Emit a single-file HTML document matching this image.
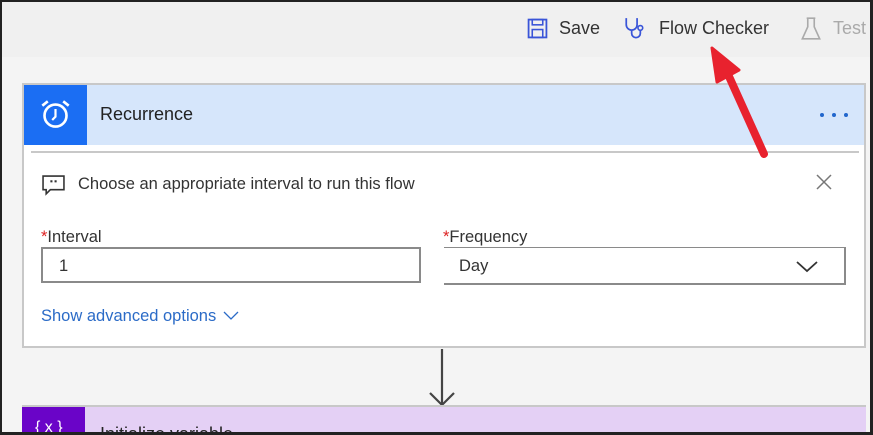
<!DOCTYPE html>
<html style="overflow:hidden;height:435px"><head><style>
*{margin:0;padding:0;box-sizing:border-box}
body{width:873px;height:435px;overflow:hidden;font-family:"Liberation Sans",sans-serif;background:#f4f4f4;position:relative}
.frame{position:absolute;left:0;top:0;width:873px;height:435px;border:2px solid #222;border-right-width:3px;border-bottom-width:3px;z-index:10;pointer-events:none}
.top{position:absolute;left:0;top:0;width:873px;height:57px;background:#f0f0f0}
.t{position:absolute;top:18px;font-size:18px;color:#333}
.card{position:absolute;left:22px;top:83px;width:844px;height:265px;background:#fff;border:2px solid #c8c8c8}
.hdr{position:absolute;left:0;top:0;width:840px;height:60px;background:#d6e6fb}
.ico{position:absolute;left:0;top:0;width:63px;height:60px;background:#1b6ef3}
.abs{position:absolute}
.lbl{font-size:16.5px;color:#333}
.box{position:absolute;border:2px solid #8a8a8a;background:#fff}
</style></head><body>
<div class="top"></div>
<svg class="abs" style="left:527px;top:18px" width="21" height="21" viewBox="0 0 20 20"><rect x="1.5" y="1.5" width="17" height="17" fill="none" stroke="#3a55d8" stroke-width="1.7"/><rect x="5" y="1.5" width="10" height="5" fill="none" stroke="#3a55d8" stroke-width="1.5"/><rect x="5" y="11" width="10" height="7.5" fill="none" stroke="#3a55d8" stroke-width="1.5"/></svg>
<div class="t" style="left:559px">Save</div>
<svg class="abs" style="left:623px;top:16px" width="26" height="26" viewBox="0 0 24 24"><path d="M3 2v6a5 5 0 0 0 10 0V2M8 13v3a4 4 0 0 0 8 0v-3" fill="none" stroke="#3a55d8" stroke-width="1.6"/><circle cx="16" cy="11" r="2.2" fill="none" stroke="#3a55d8" stroke-width="1.5"/></svg>
<div class="t" style="left:659px">Flow Checker</div>
<svg class="abs" style="left:800px;top:16px" width="22" height="26" viewBox="0 0 20 24"><path d="M6 2h8M7 2v8L2 21h16L13 10V2" fill="none" stroke="#aaa" stroke-width="1.5"/></svg>
<div class="t" style="left:833px;color:#aaa">Test</div>

<div class="card">
 <div class="hdr"></div>
 <div class="ico"><svg style="position:absolute;left:15px;top:13px" width="33" height="33" viewBox="0 0 30 30"><circle cx="15" cy="16" r="10" fill="none" stroke="#fff" stroke-width="2.4"/><path d="M15 10v7l-3 3" fill="none" stroke="#fff" stroke-width="2"/><path d="M3 7l5-4M27 7l-5-4" stroke="#fff" stroke-width="2.4"/></svg></div>
 <div class="abs" style="left:76px;top:19px;font-size:18px;color:#222">Recurrence</div>
 <svg class="abs" style="left:795px;top:27px" width="32" height="6"><circle cx="3" cy="3" r="2" fill="#2266cc"/><circle cx="15" cy="3" r="2" fill="#2266cc"/><circle cx="27" cy="3" r="2" fill="#2266cc"/></svg>
 <div class="abs" style="left:7px;top:66px;width:828px;height:2px;background:#c8c8c8"></div>
 <svg class="abs" style="left:18px;top:90px" width="23" height="21" viewBox="0 0 22 20"><path d="M1 1h20v13H8l-4 4v-4H1z" fill="none" stroke="#333" stroke-width="1.5"/><rect x="8" y="5" width="2" height="2" fill="#333"/><rect x="12" y="5" width="2" height="2" fill="#333"/></svg>
 <div class="abs lbl" style="left:54px;top:90px">Choose an appropriate interval to run this flow</div>
 <svg class="abs" style="left:791px;top:88px" width="18" height="18" viewBox="0 0 18 18"><path d="M2 2l14 14M16 2L2 16" stroke="#777" stroke-width="1.5"/></svg>
 <div class="abs lbl" style="left:17px;top:143px"><span style="color:#d22">*</span>Interval</div>
 <div class="box" style="left:17px;top:162px;width:380px;height:36px"><span class="abs lbl" style="left:16px;top:8px">1</span></div>
 <div class="abs lbl" style="left:419px;top:143px"><span style="color:#d22">*</span>Frequency</div>
 <div class="box" style="left:420px;top:162px;width:402px;height:38px;border-left:none;border-top-width:1px"><span class="abs lbl" style="left:15px;top:9px">Day</span><svg style="position:absolute;left:352px;top:12px" width="22" height="14" viewBox="0 0 22 14"><path d="M1 2l10 9 10-9" fill="none" stroke="#333" stroke-width="1.8"/></svg></div>
 <div class="abs" style="left:17px;top:222px;font-size:16.5px;color:#2b6bc7">Show advanced options <svg width="16" height="10" viewBox="0 0 16 10" style="margin-left:2px"><path d="M1 1l7 7 7-7" fill="none" stroke="#2b6bc7" stroke-width="1.3"/></svg></div>
</div>
<svg class="abs" style="left:428px;top:348px" width="30" height="60" viewBox="0 0 30 60"><path d="M14 1v56M2 45l12 12 12-12" fill="none" stroke="#444" stroke-width="2.2"/></svg>
<div class="abs" style="left:22px;top:405px;width:844px;height:30px;background:#e4d0f5;border-top:2px solid #c8c8c8;overflow:hidden">
 <div class="abs" style="left:0;top:0;width:63px;height:28px;background:#6a04c8"></div>
 <div class="abs" style="left:13px;top:13px;color:#fff;font-size:16px;line-height:16px">{ x }</div>
 <div class="abs" style="left:78px;top:18px;color:#222;font-size:18px;line-height:18px">Initialize variable</div>
</div>
<svg class="abs" style="left:700px;top:40px" width="80" height="125" viewBox="0 0 80 125"><path d="M64 114L27 32" stroke="#e8222e" stroke-width="8" stroke-linecap="round"/><path d="M12 8l27 22-22 12z" fill="#e8222e" stroke="#e8222e" stroke-width="3" stroke-linejoin="round"/></svg>
<div class="frame"></div>
</body></html>
